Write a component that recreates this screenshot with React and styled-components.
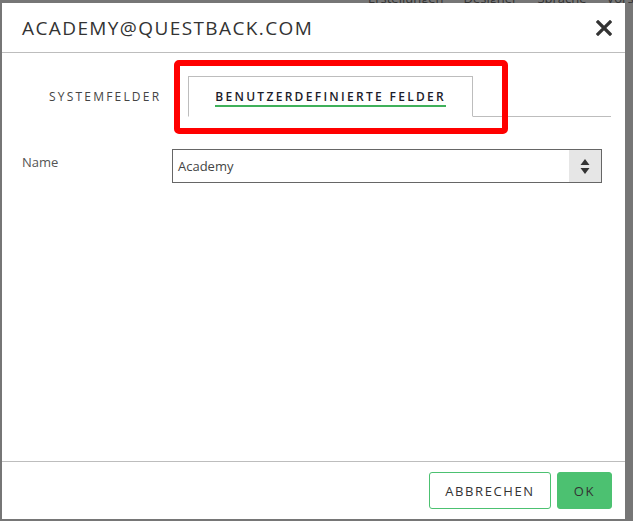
import React from "react";
import styled, { createGlobalStyle } from "styled-components";

const GlobalStyle = createGlobalStyle`
  html, body {
    margin: 0;
    padding: 0;
    background: #767676;
    font-family: "Open Sans", "Liberation Sans", sans-serif;
  }
`;

const Backdrop = styled.div`
  width: 633px;
  height: 521px;
  padding: 3px 8px 2px 2px;
  box-sizing: border-box;
  position: relative;
  overflow: hidden;
`;

const BehindMenu = styled.div`
  position: absolute;
  top: -11px;
  left: 368px;
  display: flex;
  gap: 20px;
  font-size: 13px;
  color: #333;
  white-space: nowrap;
`;

const Dialog = styled.div`
  position: relative;
  height: 100%;
  background: #fff;
  display: flex;
  flex-direction: column;
`;

const Header = styled.div`
  height: 50px;
  border-bottom: 1px solid #bdbdbd;
  display: flex;
  align-items: center;
  justify-content: space-between;
  padding: 0 12px 0 20px;
  box-sizing: border-box;
`;

const Title = styled.h1`
  margin: 0;
  font-size: 19px;
  font-weight: 400;
  letter-spacing: 1.4px;
  color: #333;
`;

const Close = styled.button`
  border: 0;
  background: none;
  padding: 0;
  width: 18px;
  height: 18px;
  display: flex;
  align-items: center;
  justify-content: center;
  cursor: pointer;
`;

const Body = styled.div`
  flex: 1;
  padding: 23px 14px 0 20px;
`;

const TabBar = styled.div`
  display: flex;
  border-bottom: 1px solid #bdbdbd;
  height: 40px;
`;

const Tab = styled.div`
  padding: 0 26px;
  display: flex;
  align-items: center;
  font-size: 12px;
  letter-spacing: ${(p) => (p.$active ? "2.3px" : "2.2px")};
  color: ${(p) => (p.$active ? "#1c1c2a" : "#444")};
  font-weight: ${(p) => (p.$active ? 600 : 400)};
  border: 1px solid ${(p) => (p.$active ? "#bdbdbd" : "transparent")};
  border-bottom: 1px solid ${(p) => (p.$active ? "#fff" : "transparent")};
  margin-bottom: -1px;
  background: #fff;
  span {
    border-bottom: ${(p) => (p.$active ? "2px solid #3fb05a" : "2px solid transparent")};
    padding-top: 2px;
    padding-bottom: 0;
  }
`;

const Field = styled.div`
  display: grid;
  grid-template-columns: 150px 430px;
  align-items: start;
  margin-top: 32px;
`;

const Label = styled.label`
  font-size: 13px;
  color: #555;
  padding-top: 4px;
`;

const Select = styled.div`
  height: 34px;
  border: 1px solid #666;
  box-sizing: border-box;
  display: flex;
  align-items: stretch;
`;

const Value = styled.div`
  flex: 1;
  font-size: 13px;
  color: #444;
  display: flex;
  align-items: center;
  padding-left: 5px;
`;

const Spinner = styled.div`
  width: 32px;
  background: #e6e6e6;
  display: flex;
  align-items: center;
  justify-content: center;
`;

const Footer = styled.div`
  height: 58px;
  border-top: 1px solid #bdbdbd;
  display: flex;
  justify-content: flex-end;
  align-items: flex-start;
  gap: 6px;
  padding: 10px 13px 0 0;
  box-sizing: border-box;
`;

const Button = styled.button`
  height: 37px;
  border-radius: 3px;
  border: 1px solid #4cc171;
  background: ${(p) => (p.$primary ? "#4cc171" : "#fff")};
  color: #333;
  font-family: inherit;
  font-size: 13px;
  letter-spacing: 1.6px;
  padding: 0 ${(p) => (p.$primary ? "16px" : "15px")};
  cursor: pointer;
`;

const Highlight = styled.div`
  position: absolute;
  left: 172px;
  top: 57px;
  width: 334px;
  height: 74px;
  border: 6px solid #ff0000;
  border-radius: 5px;
  box-sizing: border-box;
  pointer-events: none;
`;

export default function App() {
  return (
    <>
      <GlobalStyle />
      <Backdrop>
        <BehindMenu>
          <span>Erstellungen</span>
          <span>Designer</span>
          <span>Sprache</span>
          <span>Vorschau</span>
        </BehindMenu>
        <Dialog>
          <Header>
            <Title>ACADEMY@QUESTBACK.COM</Title>
            <Close aria-label="Schließen">
              <svg width="16" height="16" viewBox="0 0 16 16">
                <path d="M2 2 L14 14 M14 2 L2 14" stroke="#333" strokeWidth="3.2" strokeLinecap="square" />
              </svg>
            </Close>
          </Header>
          <Body>
            <TabBar>
              <Tab><span>SYSTEMFELDER</span></Tab>
              <Tab $active><span>BENUTZERDEFINIERTE FELDER</span></Tab>
            </TabBar>
            <Field>
              <Label>Name</Label>
              <Select>
                <Value>Academy</Value>
                <Spinner>
                  <svg width="10" height="16" viewBox="0 0 10 16">
                    <path d="M5 1 L9.5 7 L0.5 7 Z" fill="#333" />
                    <path d="M0.5 10 L9.5 10 L5 16 Z" fill="#333" />
                  </svg>
                </Spinner>
              </Select>
            </Field>
          </Body>
          <Footer>
            <Button>ABBRECHEN</Button>
            <Button $primary>OK</Button>
          </Footer>
          <Highlight />
        </Dialog>
      </Backdrop>
    </>
  );
}
